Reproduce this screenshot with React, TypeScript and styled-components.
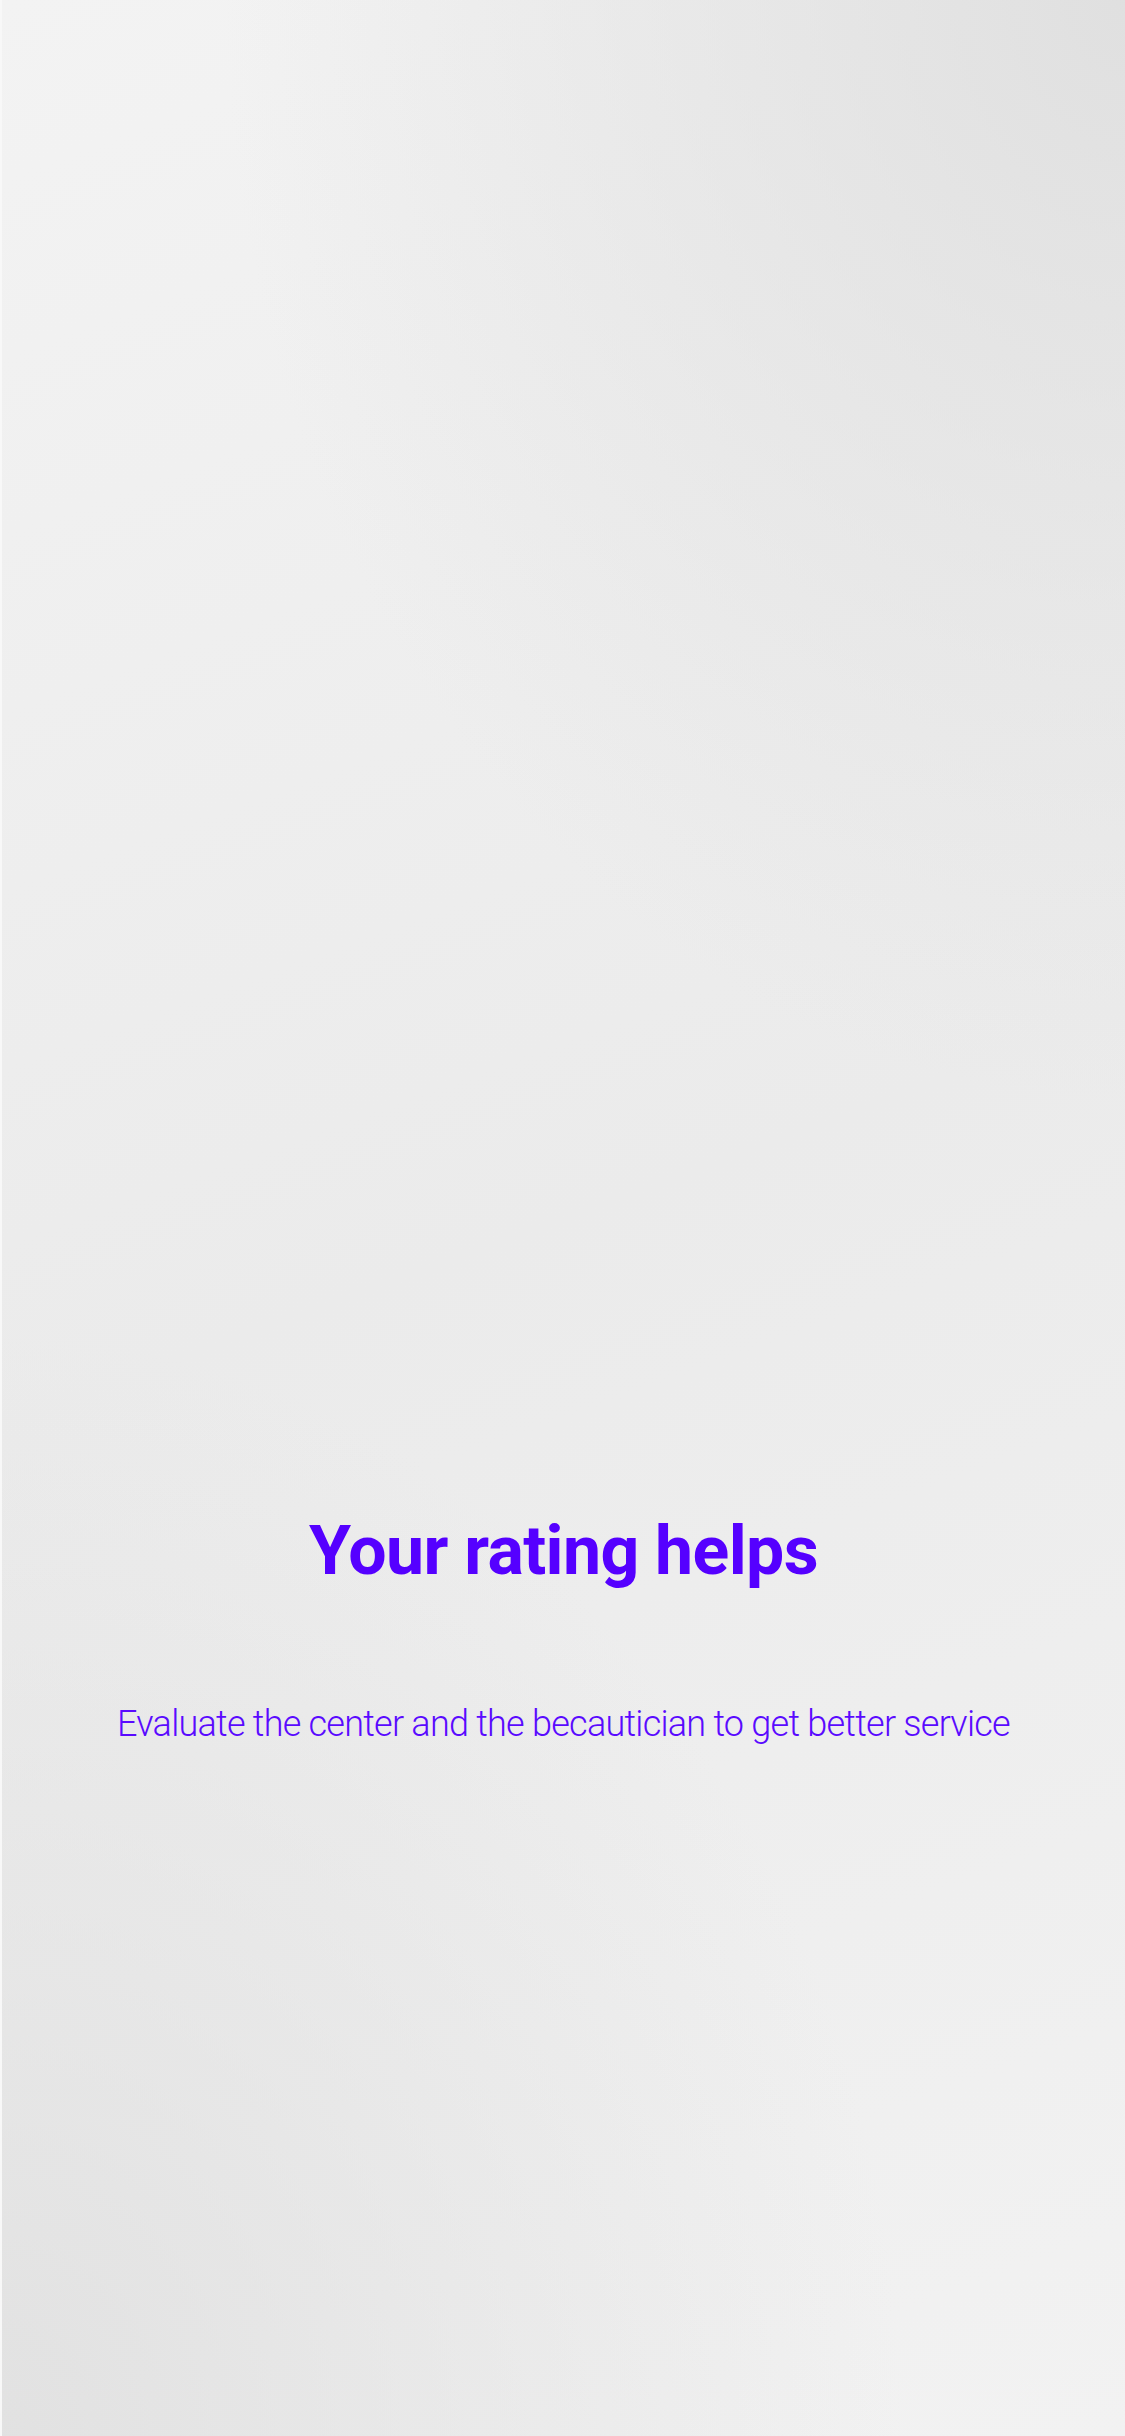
import React from "react";
import styled, { createGlobalStyle } from "styled-components";

const Global = createGlobalStyle`
  html, body { margin: 0; padding: 0; }
  body { font-family: Roboto, "Noto Sans", sans-serif; }
`;

const Screen = styled.main`
  box-sizing: border-box;
  width: 1125px;
  height: 2436px;
  border-left: 2px solid #f8f8f8;
  background:
    radial-gradient(ellipse 900px 1100px at 100% 0%, rgba(222,222,222,0.9), rgba(222,222,222,0) 100%),
    radial-gradient(ellipse 900px 1100px at 0% 100%, rgba(224,224,224,0.9), rgba(224,224,224,0) 100%),
    linear-gradient(160deg, #f3f3f3 0%, #ebebeb 50%, #f2f2f2 100%);
  display: flex;
  flex-direction: column;
  align-items: center;
  padding-top: 1511px;
  overflow: hidden;
`;

const Title = styled.h1`
  margin: 0;
  font-family: Roboto, sans-serif;
  font-weight: 700;
  font-size: 68px;
  line-height: 80px;
  letter-spacing: -0.6px;
  color: #5500ff;
  text-align: center;
`;

const Subtitle = styled.p`
  margin: 111px 0 0;
  font-family: Roboto, sans-serif;
  font-weight: 300;
  font-size: 36px;
  line-height: 44px;
  letter-spacing: -0.75px;
  color: #5a0aff;
  text-align: center;
`;

export default function App() {
  return (
    <>
      <Global />
      <Screen>
        <Title>Your rating helps</Title>
        <Subtitle>Evaluate the center and the becautician to get better service</Subtitle>
      </Screen>
    </>
  );
}
